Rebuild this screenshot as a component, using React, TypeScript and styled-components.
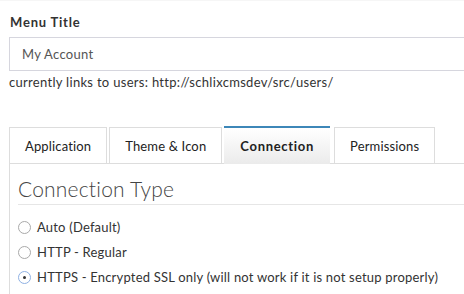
import React, { useState } from "react";
import styled, { createGlobalStyle } from "styled-components";

const tabs: string[] = ["Application", "Theme & Icon", "Connection", "Permissions"];

const options: string[] = [
  "Auto (Default)",
  "HTTP - Regular",
  "HTTPS - Encrypted SSL only (will not work if it is not setup properly)",
];

const GlobalStyle = createGlobalStyle`
  html, body {
    margin: 0;
    padding: 0;
    background: #fff;
    overflow: hidden;
  }
  body {
    font-family: Lato, "Open Sans", "Liberation Sans", sans-serif;
    color: #333;
  }
`;

export default function App() {
  const [active, setActive] = useState<number>(2);
  const [choice, setChoice] = useState<number>(2);

  return (
    <Page>
      <GlobalStyle />
      <Label>Menu Title</Label>
      <Input defaultValue="My Account" />
      <Help>currently links to users: http://schlixcmsdev/src/users/</Help>
      <TabBar>
        {tabs.map((tab: string, i: number) => (
          <Tab key={tab} $active={i === active} onClick={() => setActive(i)}>
            {tab}
          </Tab>
        ))}
      </TabBar>
      <Panel>
        <Heading>Connection Type</Heading>
        <Options>
          {options.map((opt: string, i: number) => (
            <Option key={opt} onClick={() => setChoice(i)}>
              <Radio $checked={i === choice} />
              {opt}
            </Option>
          ))}
        </Options>
      </Panel>
    </Page>
  );
}

const Page = styled.div`
  width: 464px;
  height: 294px;
  overflow: hidden;
  padding: 12px 0 0 9px;
  box-sizing: border-box;
  border-top: 1px solid #f6f6f6;
`;
const Label = styled.div`
  font-size: 13px;
  font-weight: 700;
  letter-spacing: 0.8px;
  line-height: 18px;
  color: #333;
  padding-left: 1px;
`;
const Input = styled.input`
  display: block;
  margin-top: 6px;
  width: 480px;
  height: 34px;
  box-sizing: border-box;
  border: 1px solid #d6d6de;
  padding: 0 0 0 12px;
  font-family: inherit;
  font-size: 13px;
  letter-spacing: 0.3px;
  color: #555;
  outline: none;
`;
const Help = styled.div`
  font-size: 13px;
  letter-spacing: 0.3px;
  line-height: 20px;
  margin-top: 1px;
  color: #333;
`;
const TabBar = styled.div`
  display: flex;
  align-items: flex-end;
  margin-top: 34px;
  height: 37px;
  position: relative;
  z-index: 1;
`;
const Tab = styled.div<{ $active: boolean }>`
  height: 36px;
  box-sizing: border-box;
  display: flex;
  align-items: center;
  padding: 0 15px;
  margin-right: ${(p) => (p.$active ? "4px" : "2px")};
  font-size: 13px;
  letter-spacing: 0.15px;
  color: #222;
  cursor: pointer;
  border: 1px solid #ddd;
  border-bottom: none;
  background: #fff;
  ${(p) =>
    p.$active &&
    `
    height: 38px;
    margin-bottom: -1px;
    border: none;
    border-top: 2px solid #3d87b8;
    background: linear-gradient(#ffffff, #ebebeb);
    font-weight: 700;
    letter-spacing: 0.7px;
    padding: 0 16px;
  `}
`;
const Panel = styled.div`
  border-left: 1px solid #ddd;
  border-top: 1px solid #ddd;
  padding: 12px 0 20px 8px;
`;
const Heading = styled.h2`
  margin: 0;
  font-size: 21px;
  font-weight: 300;
  letter-spacing: 0.2px;
  color: #444;
  line-height: 26px;
  padding-bottom: 2px;
  border-bottom: 1px solid #e6e6e6;
`;
const Options = styled.div`
  display: flex;
  flex-direction: column;
  gap: 5px;
  margin-top: 12px;
`;
const Option = styled.label`
  display: flex;
  align-items: center;
  gap: 6px;
  font-size: 13px;
  letter-spacing: 0.2px;
  line-height: 20px;
  color: #333;
  white-space: nowrap;
  cursor: pointer;
`;
const Radio = styled.span<{ $checked: boolean }>`
  width: 13px;
  height: 13px;
  box-sizing: border-box;
  border-radius: 50%;
  border: 1px solid ${(p) => (p.$checked ? "#8fb1e3" : "#a9a9a9")};
  background: #fff;
  display: flex;
  align-items: center;
  justify-content: center;
  flex-shrink: 0;
  &::after {
    content: "";
    width: 3px;
    height: 3px;
    border-radius: 50%;
    background: ${(p) => (p.$checked ? "#333" : "transparent")};
  }
`;
